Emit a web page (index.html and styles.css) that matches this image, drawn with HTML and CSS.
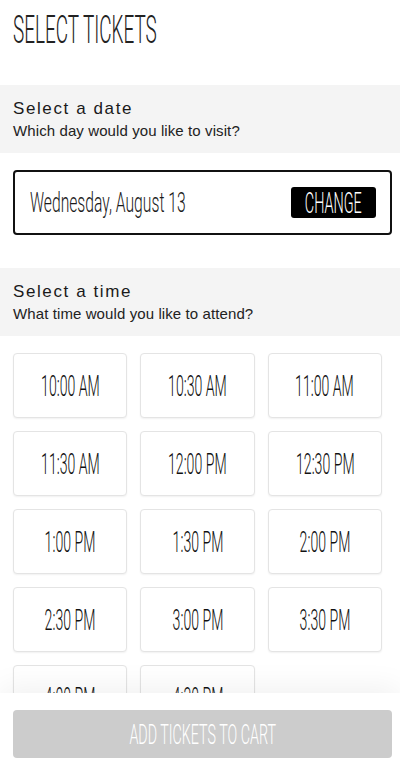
FILE: index.html
```html
<!DOCTYPE html>
<html lang="en">
<head>
    <meta charset="UTF-8">
    <meta name="viewport" content="width=device-width, initial-scale=1.0">
    <title>Select Tickets</title>
    <link rel="stylesheet" href="styles.css">
</head>
<body>
    <h1 class="page-title"><span class="squeeze left">SELECT TICKETS</span></h1>

    <div class="step">
        <h2>Select a date</h2>
        <p>Which day would you like to visit?</p>
    </div>

    <div class="date-box">
        <span class="squeeze left date-text">Wednesday, August 13</span>
        <button type="button" class="change-btn"><span class="squeeze">CHANGE</span></button>
    </div>

    <div class="step step-time">
        <h2>Select a time</h2>
        <p>What time would you like to attend?</p>
    </div>

    <div class="times">
        <button type="button" class="time"><span class="squeeze">10:00 AM</span></button>
        <button type="button" class="time"><span class="squeeze">10:30 AM</span></button>
        <button type="button" class="time"><span class="squeeze">11:00 AM</span></button>
        <button type="button" class="time"><span class="squeeze">11:30 AM</span></button>
        <button type="button" class="time"><span class="squeeze">12:00 PM</span></button>
        <button type="button" class="time"><span class="squeeze">12:30 PM</span></button>
        <button type="button" class="time"><span class="squeeze">1:00 PM</span></button>
        <button type="button" class="time"><span class="squeeze">1:30 PM</span></button>
        <button type="button" class="time"><span class="squeeze">2:00 PM</span></button>
        <button type="button" class="time"><span class="squeeze">2:30 PM</span></button>
        <button type="button" class="time"><span class="squeeze">3:00 PM</span></button>
        <button type="button" class="time"><span class="squeeze">3:30 PM</span></button>
        <button type="button" class="time"><span class="squeeze">4:00 PM</span></button>
        <button type="button" class="time"><span class="squeeze">4:30 PM</span></button>
    </div>

    <div class="cart-bar">
        <button type="button" class="cart-btn" disabled><span class="squeeze">ADD TICKETS TO CART</span></button>
    </div>
</body>
</html>
```

FILE: styles.css
```css
body {
    margin: 0;
    font-family: "Liberation Sans", Arial, sans-serif;
    color: #1a1a1a;
    background: #fff;
    padding-bottom: 90px;
}

/* condensed display text */
.squeeze {
    display: inline-block;
    flex-shrink: 0;
    font-family: Roboto, "Liberation Sans", sans-serif;
    font-weight: 300;
    transform: scaleX(0.47);
    transform-origin: center;
    white-space: nowrap;
}
.squeeze.left {
    transform-origin: left center;
}

.page-title {
    margin: 0;
    padding: 10px 13px 0;
    height: 75px;
    font-size: 39px;
    font-weight: normal;
    line-height: 40px;
    color: #222;
}
.page-title .squeeze {
    transform: scaleX(0.485);
}

.step {
    background-color: #f4f4f4;
    padding: 13px 13px 13px;
}
.step h2 {
    margin: 0;
    font-size: 17px;
    font-weight: normal;
    letter-spacing: 1.6px;
    line-height: 22px;
}
.step p {
    margin: 2px 0 0;
    font-size: 15px;
    letter-spacing: 0.1px;
    line-height: 18px;
    color: #222;
}

.date-box {
    display: flex;
    align-items: center;
    justify-content: space-between;
    margin: 17px 8px 33px 13px;
    height: 61px;
    padding: 0 14px 0 15px;
    border: 2px solid #111;
    border-radius: 4px;
}
.date-text {
    margin-right: -110px;
    font-size: 28px;
    transform: scaleX(0.56);
}
.change-btn {
    display: flex;
    flex-shrink: 0;
    align-items: center;
    justify-content: center;
    width: 85px;
    height: 31px;
    padding: 0;
    border: none;
    border-radius: 3px;
    background-color: #000;
    color: #fff;
    font-family: inherit;
    font-size: 30px;
}
.change-btn .squeeze {
    margin: 0 -40px;
    transform: scaleX(0.48);
}

.times {
    display: grid;
    grid-template-columns: repeat(3, 1fr);
    gap: 13px;
    margin: 17px 18px 0 13px;
}
.time {
    display: flex;
    align-items: center;
    justify-content: center;
    height: 65px;
    padding: 0;
    border: 1px solid #e4e4e4;
    border-radius: 4px;
    background: #fff;
    box-shadow: 0 1px 2px rgba(0, 0, 0, 0.06);
    color: #111;
    font-family: inherit;
    font-size: 30px;
}
.time .squeeze {
    margin: 0 -40px;
}

.cart-bar {
    position: fixed;
    left: 0;
    right: 0;
    bottom: 0;
    height: 77px;
    padding: 17px 8px 0 13px;
    box-sizing: border-box;
    background: #fff;
    box-shadow: 0 -6px 30px rgba(0, 0, 0, 0.06);
}
.cart-btn {
    display: flex;
    align-items: center;
    justify-content: center;
    width: 100%;
    height: 48px;
    padding: 0;
    border: none;
    border-radius: 4px;
    background-color: #cccccc;
    color: #fff;
    font-family: inherit;
    font-size: 28px;
}
.cart-btn .squeeze {
    transform: scaleX(0.51);
}
```
